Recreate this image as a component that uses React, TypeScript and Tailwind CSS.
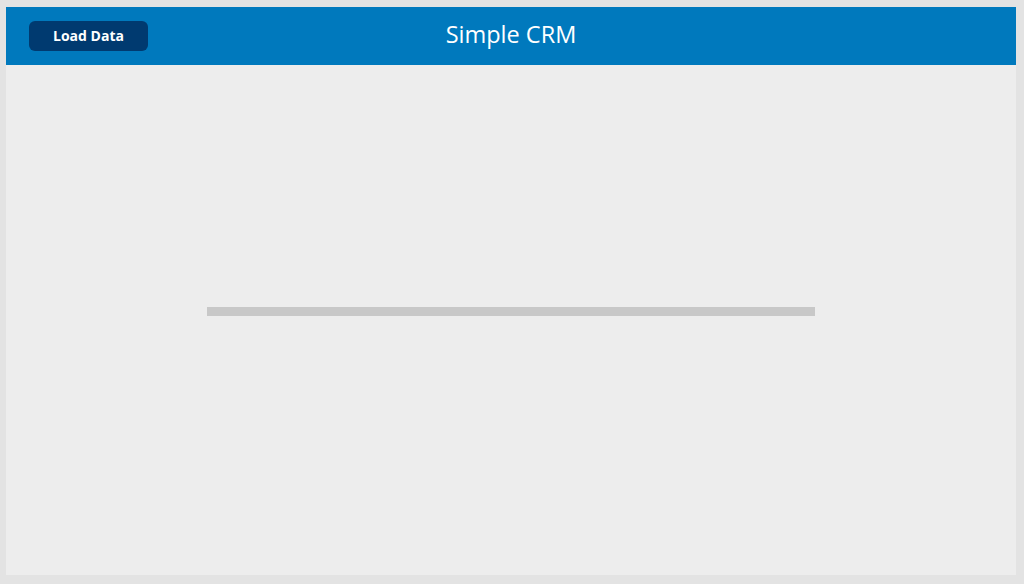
import React from 'react'

export default function App() {
  return (
    <div className="flex h-[584px] w-full flex-col bg-[#e3e3e3] pb-[9px] pl-[6px] pr-[8px] pt-[7px] font-['Open_Sans',sans-serif]">
      <div className="flex flex-1 flex-col bg-[#ededed]">
        <header className="relative flex h-[58px] items-center justify-center bg-[#0079bd]">
          <button
            type="button"
            className="absolute left-[23px] top-[14px] flex h-[30px] w-[119px] items-center justify-center rounded-[6px] bg-[#003a70] pb-[1px] text-[14px] font-bold text-white"
          >
            Load Data
          </button>
          <h1 className="pb-[3px] text-[23.5px] leading-none text-white">Simple CRM</h1>
        </header>
        <main className="flex flex-1 flex-col items-center pt-[242px]">
          <div className="h-[9px] w-[608px] bg-[#c8c8c8]" />
        </main>
      </div>
    </div>
  )
}
